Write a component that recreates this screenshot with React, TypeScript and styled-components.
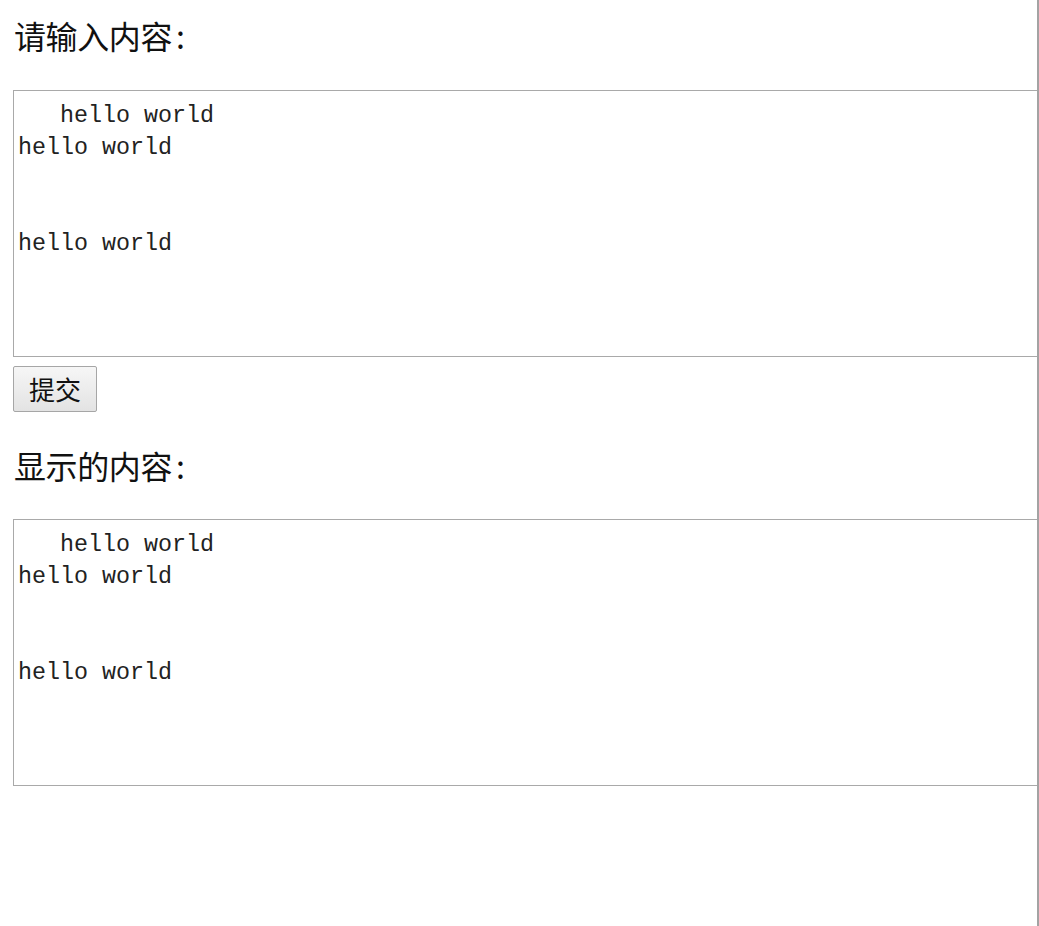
import { useState } from 'react';
import styled, { createGlobalStyle } from 'styled-components';

const GlobalStyle = createGlobalStyle`
  html, body {
    margin: 0;
    padding: 0;
    background: #ffffff;
  }

  body {
    font-family: 'Noto Sans CJK SC', 'Noto Sans', sans-serif;
    color: #1a1a1a;
  }
`;

const Page = styled.div`
  box-sizing: border-box;
  width: 1039px;
  min-height: 926px;
  padding-left: 13px;
  border-right: 2px solid #a3a3a3;
  display: flex;
  flex-direction: column;
`;

const Heading = styled.h2<{ top: number; bottom: number }>`
  margin: ${(props) => props.top}px 0 ${(props) => props.bottom}px;
  padding-left: 1px;
  height: 40px;
  font-size: 32px;
  line-height: 40px;
  font-weight: 400;
  letter-spacing: -0.4px;
  color: #111111;
`;

const Colon = styled.span`
  margin-left: 4px;
`;

const boxStyles = `
  box-sizing: border-box;
  width: 100%;
  height: 267px;
  margin: 0;
  padding: 9px 4px 0 4px;
  border: 1px solid #a9a9a9;
  border-right: none;
  border-radius: 0;
  background: #ffffff;
  font-family: 'Liberation Mono', 'DejaVu Sans Mono', monospace;
  font-size: 23.33px;
  line-height: 32px;
  color: #222222;
  white-space: pre-wrap;
  overflow: hidden;
`;

const Input = styled.textarea`
  ${boxStyles}
  display: block;
  resize: none;
  outline: none;
`;

const Output = styled.div`
  ${boxStyles}
`;

const SubmitButton = styled.button`
  align-self: flex-start;
  box-sizing: border-box;
  margin-top: 9px;
  height: 46px;
  padding: 0 15px;
  border: 1px solid #a6a6a6;
  border-radius: 2px;
  background: linear-gradient(#f6f6f6, #e3e3e3);
  font-family: 'Noto Sans CJK SC', 'Noto Sans', sans-serif;
  font-size: 26px;
  line-height: 1;
  color: #111111;
  cursor: pointer;
`;

const initialText = '   hello world\nhello world\n\n\nhello world';

const App = (): JSX.Element => {
  const [text, setText] = useState(initialText);
  const [shown, setShown] = useState(initialText);

  return (
    <>
      <GlobalStyle />
      <Page>
        <Heading top={15} bottom={35}>
          请输入内容<Colon>:</Colon>
        </Heading>
        <Input
          value={text}
          spellCheck={false}
          onChange={(e) => setText(e.target.value)}
        />
        <SubmitButton onClick={() => setShown(text)}>提交</SubmitButton>
        <Heading top={33} bottom={34}>
          显示的内容<Colon>:</Colon>
        </Heading>
        <Output>{shown}</Output>
      </Page>
    </>
  );
};

export default App;
